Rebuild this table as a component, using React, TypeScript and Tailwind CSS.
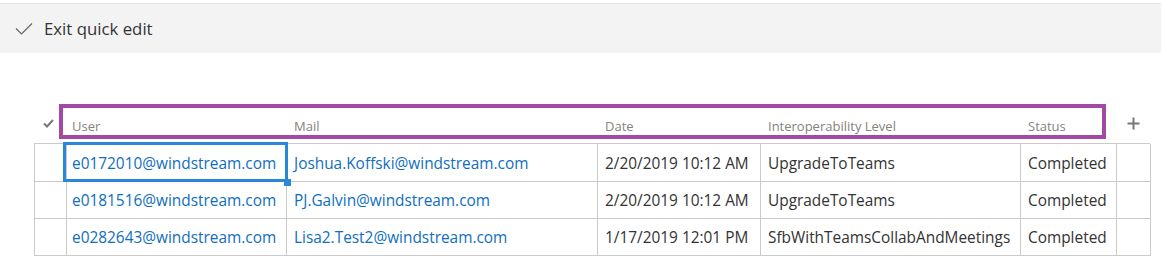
import React from "react";

const cols = "grid grid-cols-[32px_220px_311px_163px_260px_96px_34px]";

const rows = [
  ["e0172010@windstream.com", "Joshua.Koffski@windstream.com", "2/20/2019 10:12 AM", "UpgradeToTeams", "Completed"],
  ["e0181516@windstream.com", "PJ.Galvin@windstream.com", "2/20/2019 10:12 AM", "UpgradeToTeams", "Completed"],
  ["e0282643@windstream.com", "Lisa2.Test2@windstream.com", "1/17/2019 12:01 PM", "SfbWithTeamsCollabAndMeetings", "Completed"],
];

export default function App() {
  return (
    <div className="w-[1162px] h-[256px] bg-white overflow-hidden font-['Open_Sans',sans-serif] relative">
      <div className="mt-[3px] h-[50px] w-[1161px] border-t border-[#e3e3e3] bg-[#f3f3f3] flex items-center">
        <svg className="ml-[15px] w-[18px] h-[14px]" viewBox="0 0 18 14" fill="none">
          <path d="M1 6.5 L6.5 12 L17 1.5" stroke="#666" strokeWidth="1.2" />
        </svg>
        <span className="ml-[11px] text-[16.8px] text-[#333] leading-none mt-[1px]">Exit quick edit</span>
      </div>

      <div className="ml-[34px] mt-[51px] w-[1116px] relative">
        <div className={`${cols} h-[39px]`}>
          <div className="flex items-center pl-[9px]">
            <svg className="w-[11px] h-[9px]" viewBox="0 0 11 9" fill="none">
              <path d="M1 4.5 L4 7.5 L10 1" stroke="#777" strokeWidth="2" />
            </svg>
          </div>
          {["User", "Mail", "Date", "Interoperability Level", "Status"].map((h, i) => (
            <div key={h} className={`flex items-end pb-[7px] text-[13px] text-[#86827e] ${i === 0 ? "pl-[6px]" : "pl-[8px]"}`}>
              {h}
            </div>
          ))}
          <div className="flex items-center justify-center">
            <svg className="w-[13px] h-[13px]" viewBox="0 0 13 13" fill="none">
              <path d="M6.5 0.5 V12.5 M0.5 6.5 H12.5" stroke="#777" strokeWidth="2" />
            </svg>
          </div>
        </div>

        <div className="border-l border-t border-[#cacaca]">
          {rows.map((r, ri) => (
            <div key={ri} className={`${cols} ${ri === 0 ? "h-[38px]" : "h-[37px]"}`}>
              <div className="border-r border-b border-[#cacaca]" />
              {r.map((c, ci) => (
                <div
                  key={ci}
                  className={`border-r border-b border-[#cacaca] flex items-center pt-[2px] whitespace-nowrap text-[15.4px] ${ci === 0 ? "pl-[5px]" : "pl-[7px]"} ${ci < 2 ? "text-[#106ebe]" : "text-[#333]"}`}
                >
                  {c}
                </div>
              ))}
              <div className="border-r border-b border-[#cacaca]" />
            </div>
          ))}
        </div>

        <div className="absolute left-[25px] top-0 w-[1047px] h-[35px] border-4 border-[#a349a4]" />
        <div className="absolute left-[29px] top-[38px] w-[225px] h-[40px] border-[3px] border-[#2b88d8]" />
        <div className="absolute left-[250px] top-[75px] w-[7px] h-[7px] bg-[#2b88d8]" />
      </div>
    </div>
  );
}
